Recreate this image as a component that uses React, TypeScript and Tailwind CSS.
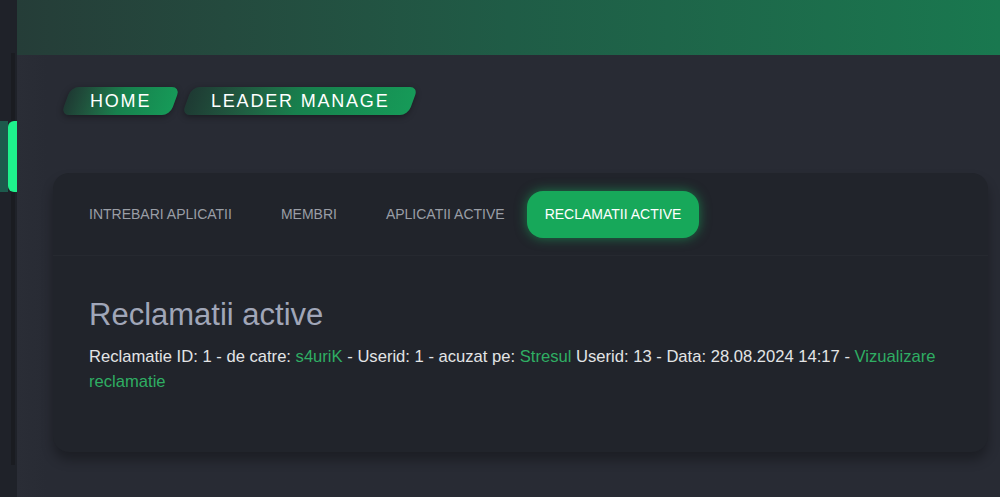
import React from "react";

const tabs = ["INTREBARI APLICATII", "MEMBRI", "APLICATII ACTIVE", "RECLAMATII ACTIVE"];

function Crumb({ label }: { label: string }) {
  return (
    <div className="-skew-x-[20deg] rounded-[8px] bg-gradient-to-r from-[#1e3a33] via-[#17804d] to-[#169a58] px-[24px] h-[28px] flex items-center shadow-[0_2px_6px_rgba(0,0,0,0.35)]">
      <span className="skew-x-[20deg] text-[18px] leading-none tracking-[0.1em] text-white">{label}</span>
    </div>
  );
}

export default function App() {
  const active = 3;

  return (
    <div className="flex h-[497px] w-[1000px] overflow-hidden bg-[#282b34] font-['Liberation_Sans',Arial,sans-serif]">
      <aside className="relative w-[17px] shrink-0 bg-[#1f2229] pt-[53px] pb-[32px]">
        <div className="ml-[11px] h-full w-[4px] bg-[#1a1c21]" />
        <div className="absolute left-0 top-[121px] flex h-[71px] w-[17px]">
          <div className="w-[8px] bg-[#1d5a4c]" />
          <div className="w-[9px] rounded-l-[6px] bg-[#1ef28c]" />
        </div>
      </aside>

      <main className="flex flex-1 flex-col">
        <header className="h-[55px] shrink-0 bg-gradient-to-r from-[#253d38] via-[#1f5c46] to-[#19784f]" />

        <div className="flex flex-1 flex-col bg-gradient-to-r from-[#2a2d36] via-[#282b34] via-[3%] to-[#282b34]">
          <div className="ml-[49px] mt-[32px] flex gap-[12px]">
            <Crumb label="HOME" />
            <Crumb label="LEADER MANAGE" />
          </div>

          <section className="ml-[36px] mr-[12px] mt-[58px] h-[279px] rounded-[16px] bg-[#21242b] shadow-[0_8px_12px_rgba(0,0,0,0.3)]">
            <div className="flex items-center border-b border-[#262930] px-[19px] pt-[18px] pb-[17px]">
              {tabs.map((t, i) => (
                <div
                  key={t}
                  className={
                    i === active
                      ? "ml-[5px] flex h-[47px] items-center rounded-[16px] bg-[#17a85a] px-[18px] text-[14px] text-white shadow-[0_0_12px_rgba(23,190,100,0.55)]"
                      : i === 0
                      ? "flex h-[47px] items-center px-[17px] text-[14px] text-[#9a9ea6]"
                      : "ml-[15px] flex h-[47px] items-center px-[17px] text-[14px] text-[#9a9ea6]"
                  }
                >
                  {t}
                </div>
              ))}
            </div>

            <div className="px-[36px] pt-[40px]">
              <h1 className="mb-[11px] text-[31px] leading-[1.2] text-[#a0a6b8]">Reclamatii active</h1>
              <p className="text-[16.6px] leading-[25px] text-[#e3e4e6]">
                Reclamatie ID: 1 - de catre: <span className="text-[#2fae63]">s4uriK</span> - Userid: 1 - acuzat pe:{" "}
                <span className="text-[#2fae63]">Stresul</span> Userid: 13 - Data: 28.08.2024 14:17 -{" "}
                <a className="text-[#2fae63]">Vizualizare reclamatie</a>
              </p>
            </div>
          </section>
        </div>
      </main>
    </div>
  );
}
